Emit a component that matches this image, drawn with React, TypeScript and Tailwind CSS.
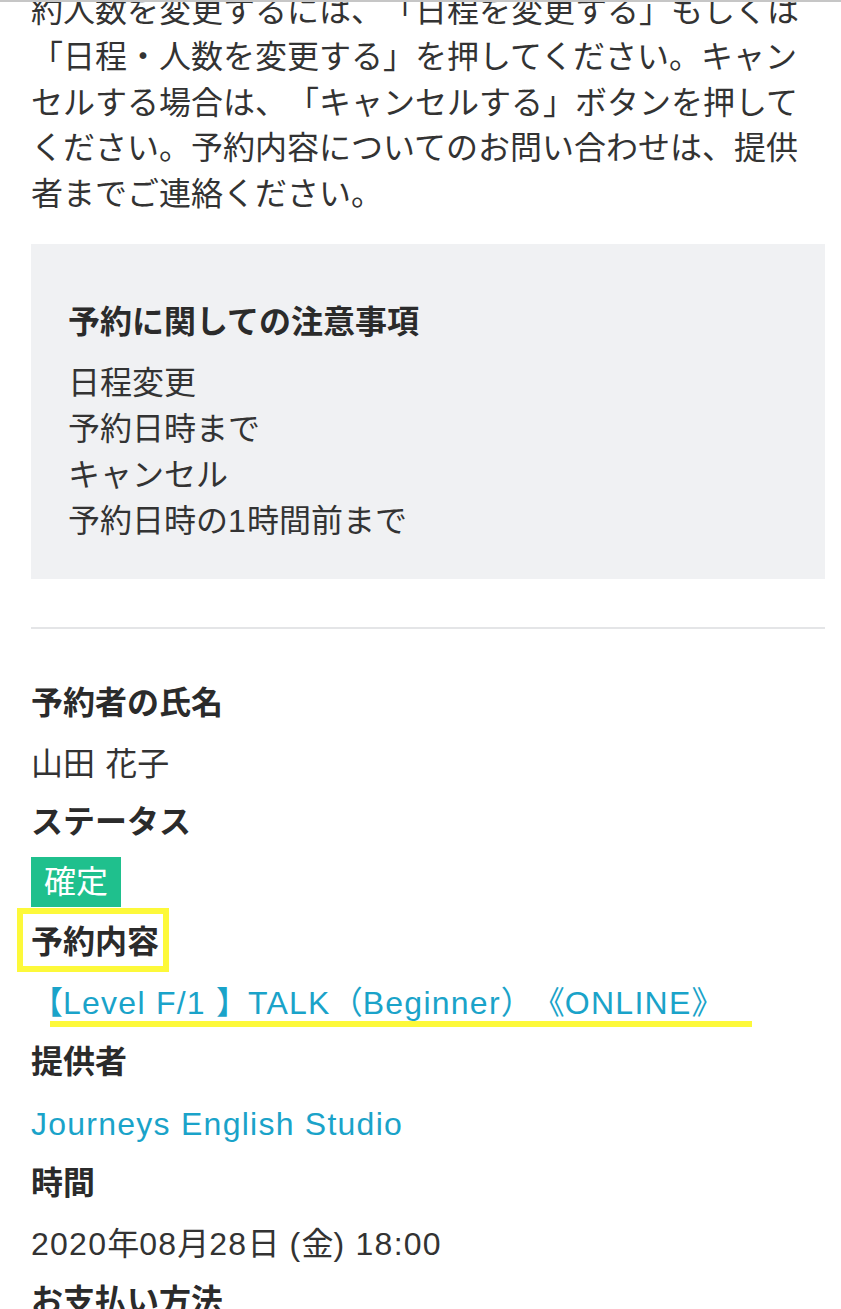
import React from "react";

const L = ({ children }: { children: React.ReactNode }) => (
  <span className="tracking-[1.25px]">{children}</span>
);

export default function App() {
  return (
    <div className="relative h-[1309px] w-[841px] overflow-hidden bg-white font-['Liberation_Sans','Noto_Sans_CJK_JP',sans-serif] text-[32px] text-[#333] [text-spacing-trim:space-all]">
      <div className="-mt-[11px] pl-[31px] pr-[16px]">
        <p className="leading-[45.75px]">
          約人数を変更するには、「日程を変更する」もしくは「日程・人数を変更する」を押してください。キャンセルする場合は、「キャンセルする」ボタンを押してください。予約内容についてのお問い合わせは、提供者までご連絡ください。
        </p>

        <div className="mt-[26px] bg-[#f0f1f3] px-[37px] pb-[35px] pt-[55px] leading-[46px]">
          <h3 className="font-bold text-[#2b2b2b]">予約に関しての注意事項</h3>
          <ul className="mt-[15px]">
            <li>日程変更</li>
            <li>予約日時まで</li>
            <li>キャンセル</li>
            <li>
              予約日時の<L>1</L>時間前まで
            </li>
          </ul>
        </div>

        <div className="mt-[48px] h-[2px] bg-[#e4e5e7]" />

        <dl className="mt-[51px] leading-[46px]">
          <dt className="font-bold text-[#2b2b2b]">予約者の氏名</dt>
          <dd className="mt-[15px]">
            山田<L> </L>花子
          </dd>

          <dt className="mt-[12px] font-bold text-[#2b2b2b]">ステータス</dt>
          <dd className="mt-[12px] flex">
            <span className="h-[50px] bg-[#1fc08d] px-[13px] leading-[50px] text-white">
              確定
            </span>
          </dd>

          <dt className="relative mt-[12px] font-bold text-[#2b2b2b]">
            予約内容
            <span className="absolute left-[-14px] top-[-11px] h-[64px] w-[152px] border-[6px] border-[#fdf93a]" />
          </dt>
          <dd className="relative mt-[15px] text-[#1aa3c9]">
            【<L>Level F/1 </L>】<L>TALK</L>（<L>Beginner</L>）《<L>ONLINE</L>》
            <span className="absolute left-[19px] top-[41px] h-[6px] w-[702px] bg-[#fdf93a]" />
          </dd>

          <dt className="mt-[13px] font-bold text-[#2b2b2b]">提供者</dt>
          <dd className="mt-[16px] text-[#1aa3c9]">
            <L>Journeys English Studio</L>
          </dd>

          <dt className="mt-[13px] font-bold text-[#2b2b2b]">時間</dt>
          <dd className="mt-[15px]">
            <L>2020</L>年<L>08</L>月<L>28</L>日<L> (</L>金<L>) 18:00</L>
          </dd>

          <dt className="mt-[11px] font-bold text-[#2b2b2b]">お支払い方法</dt>
          <dd className="mt-[15px]">
            クレジットカード
          </dd>
        </dl>
      </div>
      <div className="absolute inset-x-0 top-0 h-[2px] bg-[#c6c6c6]" />
    </div>
  );
}
